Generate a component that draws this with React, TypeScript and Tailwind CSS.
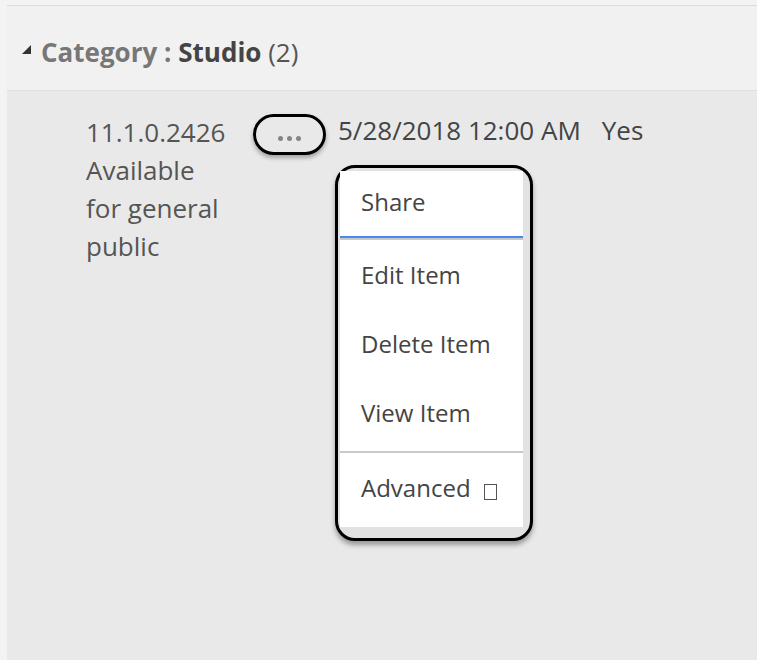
import React from "react";

const menuItems = ["Edit Item", "Delete Item", "View Item"];

function CategoryHeader() {
  return (
    <div className="flex h-[85px] items-center border-b border-[#dedede] bg-[#f1f1f1] pl-[15px] pt-[8px]">
      <svg width="9" height="9" viewBox="0 0 9 9" className="mb-[6px] shrink-0">
        <polygon points="9,0 9,9 0,9" fill="#333" />
      </svg>
      <p className="ml-[10px] text-[26px] leading-none text-[#555]">
        <span className="font-bold text-[#777]">Category : </span>
        <span className="font-bold text-[#444]">Studio</span> (2)
      </p>
    </div>
  );
}

function ActionMenu() {
  return (
    <div className="absolute left-[328px] top-[74px] w-[198px] rounded-[20px] border-[3px] border-black bg-[#e2e2e2] pb-[11px] pl-[2px] pr-[7px] pt-[3px] shadow-[0_4px_5px_rgba(0,0,0,0.35)]">
      <div className="flex flex-col bg-white text-[24px] leading-none text-[#444]">
        <div className="flex h-[65px] items-center pb-[3px] pl-[21px]">Share</div>
        <div className="h-[2px] bg-[#4a89f0]" />
        <div className="h-[2px] bg-[#c9c9c9]" />
        {menuItems.map((item) => (
          <div key={item} className="flex h-[69px] items-center pl-[21px]">
            {item}
          </div>
        ))}
        <div className="mt-[4px] h-[2px] bg-[#c9c9c9]" />
        <div className="flex h-[74px] items-center pb-[4px] pl-[21px]">
          Advanced
          <span className="ml-[13px] mt-[8px] inline-block h-[16px] w-[13px] border border-[#555]" />
        </div>
      </div>
    </div>
  );
}

export default function App() {
  return (
    <div
      className="flex h-[660px] w-[757px] flex-col overflow-hidden bg-[#f3f3f3] pl-[7px]"
      style={{ fontFamily: '"Open Sans", "Liberation Sans", sans-serif' }}
    >
      <div className="mt-[5px] flex flex-1 flex-col border-t border-[#dcdcdc]">
        <CategoryHeader />
        <div className="relative flex-1 bg-[#e9e9e9]">
          <div className="flex items-start pl-[79px] pt-[22px] text-[26px] leading-[38px]">
            <div className="w-[145px] text-[#555]">
              <p>11.1.0.2426</p>
              <p>Available for general public</p>
            </div>
            <button className="ml-[22px] mt-[1px] flex h-[41px] w-[73px] items-center justify-center gap-[4px] rounded-full border-[3px] border-black pt-[8px] shadow-[0_3px_4px_rgba(0,0,0,0.3)]">
              <span className="h-[5px] w-[5px] rounded-full bg-[#858585]" />
              <span className="h-[5px] w-[5px] rounded-full bg-[#858585]" />
              <span className="h-[5px] w-[5px] rounded-full bg-[#858585]" />
            </button>
            <div className="ml-[12px] mt-[-2px] flex text-[#444]">
              <span>5/28/2018 12:00 AM</span>
              <span className="ml-[21px]">Yes</span>
            </div>
          </div>
          <ActionMenu />
        </div>
      </div>
    </div>
  );
}
